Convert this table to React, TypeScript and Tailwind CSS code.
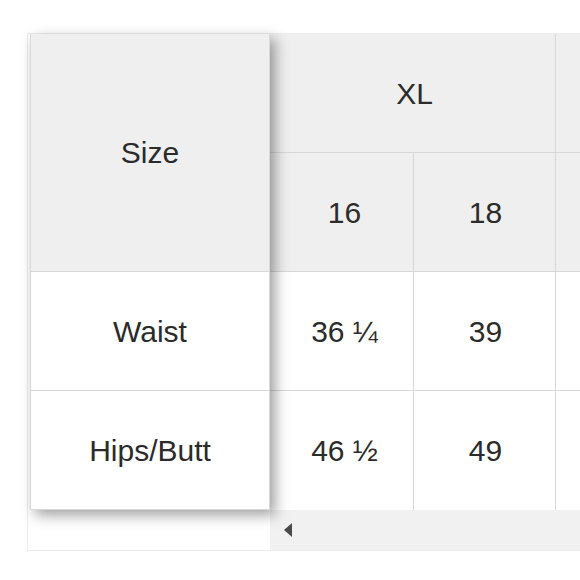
import React from "react";

const font = { fontFamily: '"Liberation Sans", Arial, sans-serif' };

export default function App() {
  return (
    <div className="w-[580px] h-[580px] overflow-hidden bg-white" style={font}>
      <div className="ml-[27px] mt-[33px] w-[600px] border border-[#ececec] pl-[2px] text-[30px] text-[#2b2b2b]">
        <div className="flex items-start">
          {/* fixed first column */}
          <div className="relative z-10 w-[240px] shrink-0 bg-white shadow-[5px_5px_13px_rgba(0,0,0,0.38)]">
            <div className="flex h-[238px] items-center justify-center border-x border-b border-[#d8d8d8] bg-[#efefef]">
              Size
            </div>
            <div className="flex h-[119px] items-center justify-center border-x border-b border-[#d8d8d8] bg-white">
              Waist
            </div>
            <div className="flex h-[119px] items-center justify-center border-x border-b border-[#d8d8d8] bg-white">
              Hips/Butt
            </div>
          </div>

          {/* scrolling part */}
          <div className="flex-1 overflow-hidden">
            <div className="flex">
              <div className="flex h-[119px] w-[286px] shrink-0 items-center justify-center border-b border-r border-[#d8d8d8] bg-[#efefef] pl-[4px]">
                XL
              </div>
              <div className="h-[119px] w-[143px] shrink-0 border-b border-[#d8d8d8] bg-[#efefef]" />
            </div>
            <div className="flex">
              <div className="flex h-[119px] w-[144px] shrink-0 items-center justify-center border-b border-r border-[#d8d8d8] bg-[#efefef] pl-[6px]">
                16
              </div>
              <div className="flex h-[119px] w-[142px] shrink-0 items-center justify-center border-b border-r border-[#d8d8d8] bg-[#efefef] pl-[2px]">
                18
              </div>
              <div className="h-[119px] w-[143px] shrink-0 border-b border-[#d8d8d8] bg-[#efefef]" />
            </div>
            <div className="flex">
              <div className="flex h-[119px] w-[144px] shrink-0 items-center justify-center border-b border-r border-[#d8d8d8] pl-[6px]">
                36 ¼
              </div>
              <div className="flex h-[119px] w-[142px] shrink-0 items-center justify-center border-b border-r border-[#d8d8d8] pl-[2px]">
                39
              </div>
              <div className="h-[119px] w-[143px] shrink-0 border-b border-[#d8d8d8]" />
            </div>
            <div className="flex">
              <div className="flex h-[119px] w-[144px] shrink-0 items-center justify-center border-r border-[#d8d8d8] pl-[6px]">
                46 ½
              </div>
              <div className="flex h-[119px] w-[142px] shrink-0 items-center justify-center border-r border-[#d8d8d8] pl-[2px]">
                49
              </div>
              <div className="h-[119px] w-[143px] shrink-0" />
            </div>
            <div className="flex h-[40px] items-center bg-[#f1f1f1] pl-[14px]">
              <div className="h-0 w-0 border-y-[7px] border-r-[8px] border-y-transparent border-r-[#4a4a4a]" />
            </div>
          </div>
        </div>
      </div>
    </div>
  );
}
